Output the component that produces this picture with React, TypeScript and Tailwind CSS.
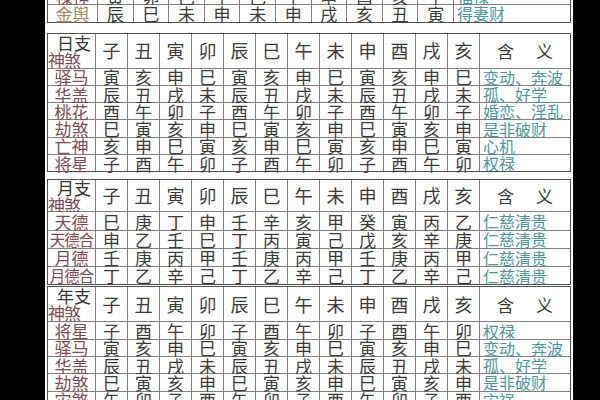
import { Fragment } from "react";

const BRANCHES = ["子", "丑", "寅", "卯", "辰", "巳", "午", "未", "申", "酉", "戌", "亥"];

type Row = { label: string; values: string[]; meaning: string };

const topRows: Row[] = [
  { label: "禄神", values: ["寅", "卯", "巳", "午", "巳", "午", "申", "酉", "亥", "子"], meaning: "福禄" },
  { label: "金舆", values: ["辰", "巳", "未", "申", "未", "申", "戌", "亥", "丑", "寅"], meaning: "得妻财" },
];

const dayRows: Row[] = [
  { label: "驿马", values: ["寅", "亥", "申", "巳", "寅", "亥", "申", "巳", "寅", "亥", "申", "巳"], meaning: "变动、奔波" },
  { label: "华盖", values: ["辰", "丑", "戌", "未", "辰", "丑", "戌", "未", "辰", "丑", "戌", "未"], meaning: "孤、好学" },
  { label: "桃花", values: ["酉", "午", "卯", "子", "酉", "午", "卯", "子", "酉", "午", "卯", "子"], meaning: "婚恋、淫乱" },
  { label: "劫煞", values: ["巳", "寅", "亥", "申", "巳", "寅", "亥", "申", "巳", "寅", "亥", "申"], meaning: "是非破财" },
  { label: "亡神", values: ["亥", "申", "巳", "寅", "亥", "申", "巳", "寅", "亥", "申", "巳", "寅"], meaning: "心机" },
  { label: "将星", values: ["子", "酉", "午", "卯", "子", "酉", "午", "卯", "子", "酉", "午", "卯"], meaning: "权禄" },
];

const monthRows: Row[] = [
  { label: "天德", values: ["巳", "庚", "丁", "申", "壬", "辛", "亥", "甲", "癸", "寅", "丙", "乙"], meaning: "仁慈清贵" },
  { label: "天德合", values: ["申", "乙", "壬", "巳", "丁", "丙", "寅", "己", "戊", "亥", "辛", "庚"], meaning: "仁慈清贵" },
  { label: "月德", values: ["壬", "庚", "丙", "甲", "壬", "庚", "丙", "甲", "壬", "庚", "丙", "甲"], meaning: "仁慈清贵" },
  { label: "月德合", values: ["丁", "乙", "辛", "己", "丁", "乙", "辛", "己", "丁", "乙", "辛", "己"], meaning: "仁慈清贵" },
];

const yearRows: Row[] = [
  { label: "将星", values: ["子", "酉", "午", "卯", "子", "酉", "午", "卯", "子", "酉", "午", "卯"], meaning: "权禄" },
  { label: "驿马", values: ["寅", "亥", "申", "巳", "寅", "亥", "申", "巳", "寅", "亥", "申", "巳"], meaning: "变动、奔波" },
  { label: "华盖", values: ["辰", "丑", "戌", "未", "辰", "丑", "戌", "未", "辰", "丑", "戌", "未"], meaning: "孤、好学" },
  { label: "劫煞", values: ["巳", "寅", "亥", "申", "巳", "寅", "亥", "申", "巳", "寅", "亥", "申"], meaning: "是非破财" },
  { label: "灾煞", values: ["午", "卯", "子", "酉", "午", "卯", "子", "酉", "午", "卯", "子", "酉"], meaning: "灾祸" },
];

// 3-char labels need to squeeze into the narrow first column
function labelSize(label: string) {
  return label.length > 2 ? "text-[15.5px] tracking-[-1px]" : "text-[17px]";
}

function BodyRow({ row, h }: { row: Row; h: string }) {
  return (
    <>
      <div className={`${h} bg-white flex items-center justify-center leading-none text-[#7d4c52] whitespace-nowrap overflow-visible ${labelSize(row.label)}`}>
        {row.label}
      </div>
      {row.values.map((v, i) => (
        <div key={i} className={`${h} bg-white flex items-center justify-center text-[17px] leading-none text-[#3a3a3a] overflow-visible`}>
          {v}
        </div>
      ))}
      <div className={`${h} bg-white flex items-center pl-[3px] text-[16px] leading-none text-[#4a9898] whitespace-nowrap overflow-hidden`}>
        {row.meaning}
      </div>
    </>
  );
}

function BranchTable({ corner, rows, headH, rowH, className }: { corner: string; rows: Row[]; headH: string; rowH: string; className: string }) {
  return (
    <div className={`grid grid-cols-[47px_repeat(12,31px)_1fr] gap-px bg-[#808080] border border-[#505050] ${className}`}>
      <div className={`${headH} bg-white flex flex-col justify-center leading-none`}>
        <div className="self-end pr-[4px] text-[17px] text-[#333]">{corner}</div>
        <div className="self-start text-[17px] text-[#7d4c52] tracking-[-1px]">神煞</div>
      </div>
      {BRANCHES.map((b) => (
        <div key={b} className={`${headH} bg-white flex items-center justify-center text-[18px] text-[#3a3a3a]`}>
          {b}
        </div>
      ))}
      <div className={`${headH} bg-white flex items-center justify-center gap-[22px] text-[17px] text-[#3a3a3a]`}>
        <span>含</span>
        <span>义</span>
      </div>
      {rows.map((r) => (
        <BodyRow key={r.label} row={r} h={rowH} />
      ))}
    </div>
  );
}

export default function App() {
  return (
    <div
      className="w-[600px] h-[400px] bg-black flex overflow-hidden"
      style={{ fontFamily: '"Noto Sans CJK SC", "Noto Sans", sans-serif' }}
    >
      <div className="w-[45px] shrink-0" />
      <div className="w-[528px] shrink-0 bg-white pl-[2px] pr-[2px] flex flex-col overflow-hidden">
        <div className="mt-[-13px] grid grid-cols-[49px_repeat(10,34.6px)_1fr] gap-px bg-[#808080] border border-[#505050]">
          {topRows.map((r, ri) => (
            <Fragment key={r.label}>
              <div
                className={`h-[16.3px] bg-white flex items-center justify-center text-[17px] leading-none whitespace-nowrap overflow-visible ${ri === 1 ? "text-[#a58a5c]" : "text-[#7d4c52]"}`}
              >
                {r.label}
              </div>
              {r.values.map((v, i) => (
                <div key={i} className="h-[16.3px] bg-white flex items-center justify-center text-[17px] leading-none text-[#3a3a3a] overflow-visible">
                  {v}
                </div>
              ))}
              <div className="h-[16.3px] bg-white flex items-center pl-[3px] text-[16px] leading-none text-[#4a9898] whitespace-nowrap overflow-hidden">
                {r.meaning}
              </div>
            </Fragment>
          ))}
        </div>
        <BranchTable corner="日支" rows={dayRows} headH="h-[34px]" rowH="h-[16.3px]" className="mt-[10px]" />
        <BranchTable corner="月支" rows={monthRows} headH="h-[31px]" rowH="h-[17.25px]" className="mt-[7px]" />
        <BranchTable corner="年支" rows={yearRows} headH="h-[34px]" rowH="h-[16.3px]" className="mt-[1px]" />
      </div>
    </div>
  );
}
